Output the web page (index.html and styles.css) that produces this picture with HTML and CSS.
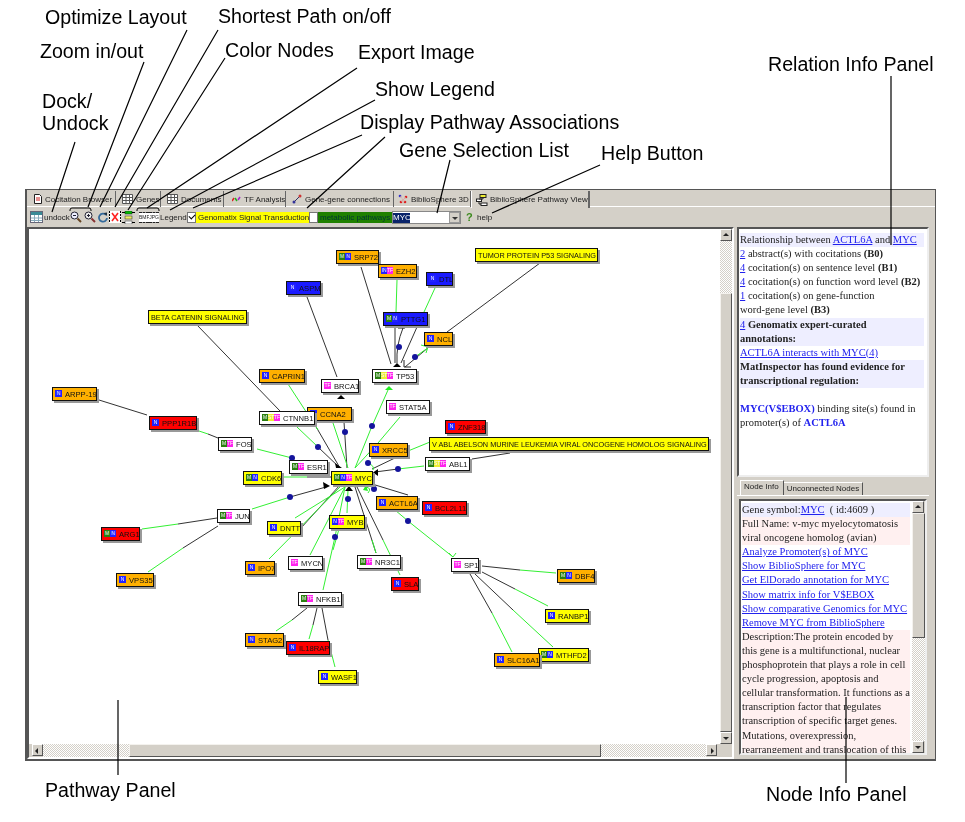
FILE: index.html
```html
<!DOCTYPE html>
<html lang="en">
<head>
    <meta charset="UTF-8">
    <title>BiblioSphere Pathway View</title>
    <link rel="stylesheet" href="styles.css">
</head>
<body>
<div class="page">

    <div class="app">
        <div class="tabs">
            <div class="tab t-88">
                <svg class="tab-icon" width="8" height="10" viewBox="0 0 8 10"><path d="M.5.5h5l2 2v7h-7z" fill="#fff" stroke="#222"/><path d="M2 4h4M2 6h4" stroke="#c22"/></svg>Cocitation Browser</div>
            <div class="tab t-45">
                <svg class="tab-icon" width="11" height="10" viewBox="0 0 11 10"><path d="M.5.5h10v9H.5zM.5 3.500h10M.5 6.500h10M4 .5v9M7.500.5v9" fill="#fff" stroke="#555"/></svg>Genes</div>
            <div class="tab t-63">
                <svg class="tab-icon" width="11" height="10" viewBox="0 0 11 10"><path d="M.5.5h10v9H.5zM.5 3.500h10M.5 6.500h10M4 .5v9M7.500.5v9" fill="#fff" stroke="#555"/></svg>Documents</div>
            <div class="tab t-62 t-wide">
                <svg class="tab-icon" width="9" height="6" viewBox="0 0 9 6"><path d="M0 5l2-3" stroke="#d22" stroke-width="1.500"/><path d="M3 2l2 3" stroke="#2a2" stroke-width="1.500"/><path d="M6 4l2-3" stroke="#a2c" stroke-width="1.500"/></svg>TF Analysis</div>
            <div class="tab t-108">
                <svg class="tab-icon" width="10" height="10" viewBox="0 0 10 10"><path d="M2 8L8 2" stroke="#336"/><circle cx="2" cy="8" r="1.500" fill="#339"/><circle cx="8" cy="2" r="1.500" fill="#c33"/></svg>Gene-gene connections</div>
            <div class="tab t-77 t-narrow">
                <svg class="tab-icon" width="10" height="10" viewBox="0 0 10 10"><circle cx="2" cy="2" r="1.300" fill="#33c"/><circle cx="8" cy="3" r="1.300" fill="#d22"/><circle cx="3" cy="8" r="1.300" fill="#d22"/><circle cx="7" cy="8" r="1.300" fill="#d22"/><path d="M2 2l5 6M8 3L3 8" stroke="#d88" stroke-dasharray="1 1"/></svg>BiblioSphere 3D</div>
            <div class="tab t-119 t-narrow active">
                <svg class="tab-icon" width="12" height="12" viewBox="0 0 12 12"><rect x="4" y=".5" width="6" height="3" fill="#ee3" stroke="#222"/><rect x=".5" y="5" width="5" height="2.500" fill="#fff" stroke="#222"/><rect x="5" y="9" width="6" height="2.500" fill="#fff" stroke="#222"/><path d="M7 4v1H3M3 8v2h2" fill="none" stroke="#222"/></svg>BiblioSphere Pathway View</div>
        </div>

        <div class="toolbar">
            <svg class="tool" width="13" height="12" viewBox="0 0 13 12"><rect x=".5" y=".5" width="12" height="11" fill="#fff" stroke="#667"/><rect x="1" y="1" width="11" height="3" fill="#3a8a96"/><path d="M1 7h11M1 9.500h11M4.500 4v7M8.500 4v7" stroke="#8ab"/></svg>
            <span class="tool-text undock">undock</span>
            <svg class="tool" width="12" height="12" viewBox="0 0 12 12"><circle cx="4.500" cy="4.500" r="3.500" fill="#eef" stroke="#223"/><path d="M3 4.500h3" stroke="#223"/><path d="M7.500 7.500l3.500 3.500" stroke="#642" stroke-width="2"/></svg>
            <svg class="tool zoom2" width="12" height="12" viewBox="0 0 12 12"><circle cx="4.500" cy="4.500" r="3.500" fill="#eee" stroke="#223"/><path d="M3 4.500h3M4.500 3v3" stroke="#223"/><path d="M7.500 7.500l3.500 3.500" stroke="#833" stroke-width="2"/></svg>
            <svg class="tool rotate" width="10" height="11" viewBox="0 0 10 11"><path d="M8 3a4 4 0 1 0 1 3" fill="none" stroke="#346a9c" stroke-width="1.800"/><path d="M5.500 1l3.500-.5v3.500z" fill="#234"/></svg>
            <svg class="tool cross" width="12" height="12" viewBox="0 0 12 12"><rect width="12" height="12" fill="#fff"/><path d="M.5 0v12M11.500 0v12" stroke="#000" stroke-dasharray="2 1"/><path d="M3 2l6 8M9 2l-6 8" stroke="#f22" stroke-width="1.600"/></svg>
            <svg class="tool colors" width="13" height="13" viewBox="0 0 13 13"><rect x="3" y="0" width="7" height="3" fill="#0b0" stroke="#222" stroke-width=".5"/><rect x="3" y="5" width="7" height="3" fill="#ee6" stroke="#222" stroke-width=".5"/><rect x="3" y="10" width="7" height="3" fill="#fff" stroke="#222" stroke-width=".5"/><path d="M0 1.500h3M10 1.500h3M0 11.500h3M10 11.500h3" stroke="#000"/></svg>
            <span class="export"><span class="exp">BMP</span><span class="exp">JPG</span></span>
            <span class="tool-text legend">Legend</span>
            <span class="check on"></span>
            <span class="swatch sw-yellow">Genomatix Signal Transduction</span>
            <span class="check"></span>
            <span class="swatch sw-green">metabolic pathways</span>
            <div class="combo"><span class="combo-val">MYC</span><span class="combo-btn"></span></div>
            <span class="help-mark">?</span>
            <span class="tool-text help">help</span>
        </div>

        <div class="main">
            <div class="pathway">
                <div class="canvas-row">
                    <div class="canvas"></div>
                    <div class="vbar">
                        <span class="sb-btn sb-up"></span>
                        <span class="sb-track sb-short"></span>
                        <span class="sb-thumb sb-grow"></span>
                        <span class="sb-btn sb-down"></span>
                    </div>
                </div>
                <div class="hbar">
                    <span class="sb-btn sb-left"></span>
                    <span class="sb-track hb-a"></span>
                    <span class="sb-thumb hb-t"></span>
                    <span class="sb-track hb-b"></span>
                    <span class="sb-btn sb-right"></span>
                </div>
            </div>

            <div class="side">
                <div class="relation">
                    <p class="hl"><span class="nb">Relationship between <a>ACTL6A</a> and <a>MYC</a></span></p>
                    <p><a>2</a> abstract(s) with cocitations <b>(B0)</b></p>
                    <p><a>4</a> cocitation(s) on sentence level <b>(B1)</b></p>
                    <p><a>4</a> cocitation(s) on function word level <b>(B2)</b></p>
                    <p><a>1</a> cocitation(s) on gene-function<br>word-gene level <b>(B3)</b></p>
                    <p class="hl"><a>4</a> <b>Genomatix expert-curated annotations:</b></p>
                    <p><a>ACTL6A interacts with MYC(4)</a></p>
                    <p class="hl"><b>MatInspector has found evidence for transcriptional regulation:</b></p>
                    <p>&nbsp;</p>
                    <p><a class="bl">MYC(V$EBOX)</a> binding site(s) found in promoter(s) of <a class="bl">ACTL6A</a></p>
                </div>

                <div class="subtabs">
                    <span class="subtab active">Node Info</span>
                    <span class="subtab">Unconnected Nodes</span>
                </div>
                <div class="nodeinfo-wrap">
                    <div class="nodeinfo">
                        <p class="hl">Gene symbol:<a>MYC</a> &nbsp;( id:4609 )</p>
                        <p class="pk">Full Name: v-myc myelocytomatosis viral oncogene homolog (avian)</p>
                        <p><a>Analyze Promoter(s) of MYC</a></p>
                        <p><a>Show BiblioSphere for MYC</a></p>
                        <p><a>Get ElDorado annotation for MYC</a></p>
                        <p><a>Show matrix info for V$EBOX</a></p>
                        <p><a>Show comparative Genomics for MYC</a></p>
                        <p><a>Remove MYC from BiblioSphere</a></p>
                        <p class="pk">Description:The protein encoded by this gene is a multifunctional, nuclear phosphoprotein that plays a role in cell cycle progression, apoptosis and cellular transformation. It functions as a transcription factor that regulates transcription of specific target genes. Mutations, overexpression, rearrangement and translocation of this</p>
                    </div>
                    <div class="vbar vbar-small">
                        <span class="sb-btn sb-up"></span>
                        <span class="sb-thumb info-thumb"></span>
                        <span class="sb-track sb-grow"></span>
                        <span class="sb-btn sb-down"></span>
                    </div>
                </div>
            </div>
        </div>
    </div>

    <!-- network drawing, page coordinates -->
    <svg class="graph" width="965" height="822" viewBox="0 0 965 822">
        <g class="edge-k">
            <path d="M99 400L147 415M208 434L218 438M217 518L178 524M218 526L183 548"/>
            <path d="M307 297L337 377M361 267L391 364M395 326V363M417 327L401 363M403 328Q396 345 397 363"/>
            <path d="M429 347L405 367M540 263L447 332M197 325L280 411M344 422L347 468M318 447L340 468M315 425L340 468"/>
            <path d="M397 457L372 469M510 453L472 459M398 469L375 472M307 477H331M290 497L326 487M301 528L340 485"/>
            <path d="M372 484L408 495M307 608L292 620M317 608L313 625M322 608L328 640M482 566L520 570M482 572L515 589"/>
            <path d="M475 574L513 610M470 574L492 613M355 487L376 553M357 487L383 540"/>
        </g>
        <g class="edge-g">
            <path d="M199 431L208 434M178 524L142 529M183 548L148 572M397 280L396 312M435 288L424 312"/>
            <path d="M429 347L415 357M288 384L318 430M333 423L348 468M297 427L318 447M400 417L378 443L355 468"/>
            <path d="M388 390L372 426L355 468M408 451L430 442M424 466L398 469M257 449L292 458M282 477H307"/>
            <path d="M252 509L290 497M295 518L345 487M347 513L348 490M333 550L339 529M269 559L340 487M310 555L345 487"/>
            <path d="M323 590L335 537L345 487M376 553L372 540M400 575L383 540M395 510L408 521L453 557"/>
            <path d="M292 620L276 631M313 625L309 639M328 640L335 667M520 570L556 573M515 589L548 606"/>
            <path d="M513 610L553 647M492 613L512 652M368 463Q375 466 373 470M368 493Q372 488 366 487"/>
            <path d="M449 553L453 557L456 553M421 345L428 347L426 353"/>
        </g>
        <g class="heads">
            <path d="M393 367h8l-4 -4z"/>
            <path d="M337 399h8l-4 -4z"/>
            <path d="M335 463l7 5h-6z"/>
            <path d="M323 482l7 4 -6 3z"/>
            <path d="M345 491h8l-4 -5z"/>
            <path d="M378 469v7l-5 -3.500z"/>
        </g>
        <path class="head-open" d="M404 360v7h7"/>
        <path class="head-t" d="M398 328h7"/>
        <path class="head-g" d="M385 390l4 -4 4 4zM363 490l3 -5 2 6z"/>
        <g class="dots">
            <circle cx="399" cy="347" r="3"/><circle cx="415" cy="357" r="3"/><circle cx="345" cy="432" r="3"/>
            <circle cx="318" cy="447" r="3"/><circle cx="372" cy="426" r="3"/><circle cx="292" cy="458" r="3"/>
            <circle cx="368" cy="463" r="3"/><circle cx="398" cy="469" r="3"/><circle cx="290" cy="497" r="3"/>
            <circle cx="374" cy="489" r="3"/><circle cx="348" cy="499" r="3"/><circle cx="335" cy="537" r="3"/>
            <circle cx="408" cy="521" r="3"/>
        </g>
    </svg>

    <div class="nodes">
        <div class="node c-o" style="left:336px;top:250px;width:43px"><i class="bd m">M</i><i class="bd n">N</i>SRP72</div>
        <div class="node c-o" style="left:378px;top:264px;width:39px"><i class="bd n">IN</i><i class="bd f">TF</i>EZH2</div>
        <div class="node c-b" style="left:426px;top:272px;width:27px"><i class="bd n">N</i>DTL</div>
        <div class="node c-b" style="left:286px;top:281px;width:35px"><i class="bd n">N</i>ASPM</div>
        <div class="node c-b" style="left:383px;top:312px;width:45px"><i class="bd m">M</i><i class="bd n">N</i>PTTG1</div>
        <div class="node c-o" style="left:424px;top:332px;width:29px"><i class="bd n">N</i>NCL</div>
        <div class="node c-w" style="left:372px;top:369px;width:45px"><i class="bd m">M</i><i class="bd s">ST</i><i class="bd f">TF</i>TP53</div>
        <div class="node c-o" style="left:259px;top:369px;width:46px"><i class="bd n">N</i>CAPRIN1</div>
        <div class="node c-w" style="left:321px;top:379px;width:38px"><i class="bd f">TF</i>BRCA1</div>
        <div class="node c-o" style="left:307px;top:407px;width:45px"><i class="bd n">N</i>CCNA2</div>
        <div class="node c-w" style="left:259px;top:411px;width:56px"><i class="bd m">M</i><i class="bd s">ST</i><i class="bd f">TF</i>CTNNB1</div>
        <div class="node c-w" style="left:386px;top:400px;width:44px"><i class="bd f">TF</i>STAT5A</div>
        <div class="node c-r" style="left:445px;top:420px;width:41px"><i class="bd n">N</i>ZNF318</div>
        <div class="node c-o" style="left:369px;top:443px;width:39px"><i class="bd n">N</i>XRCC5</div>
        <div class="node c-w" style="left:425px;top:457px;width:45px"><i class="bd m">M</i><i class="bd s">ST</i><i class="bd f">TF</i>ABL1</div>
        <div class="node c-w" style="left:218px;top:437px;width:34px"><i class="bd m">M</i><i class="bd f">TF</i>FOS</div>
        <div class="node c-w" style="left:289px;top:460px;width:39px"><i class="bd m">M</i><i class="bd f">TF</i>ESR1</div>
        <div class="node c-y" style="left:243px;top:471px;width:39px"><i class="bd m">M</i><i class="bd n">N</i>CDK6</div>
        <div class="node c-y" style="left:331px;top:471px;width:42px"><i class="bd m">M</i><i class="bd n">N</i><i class="bd f">TF</i>MYC</div>
        <div class="node c-o" style="left:376px;top:496px;width:42px"><i class="bd n">N</i>ACTL6A</div>
        <div class="node c-r" style="left:422px;top:501px;width:45px"><i class="bd n">N</i>BCL2L11</div>
        <div class="node c-w" style="left:217px;top:509px;width:33px"><i class="bd m">M</i><i class="bd f">TF</i>JUN</div>
        <div class="node c-y" style="left:267px;top:521px;width:34px"><i class="bd n">N</i>DNTT</div>
        <div class="node c-y" style="left:329px;top:515px;width:36px"><i class="bd n">N</i><i class="bd f">TF</i>MYB</div>
        <div class="node c-o" style="left:52px;top:387px;width:45px"><i class="bd n">N</i>ARPP-19</div>
        <div class="node c-r" style="left:149px;top:416px;width:48px"><i class="bd n">N</i>PPP1R1B</div>
        <div class="node c-r" style="left:101px;top:527px;width:39px"><i class="bd m">M</i><i class="bd n">N</i>ARG1</div>
        <div class="node c-o" style="left:116px;top:573px;width:38px"><i class="bd n">N</i>VPS35</div>
        <div class="node c-w" style="left:288px;top:556px;width:35px"><i class="bd f">TF</i>MYCN</div>
        <div class="node c-o" style="left:245px;top:561px;width:30px"><i class="bd n">N</i>IPO7</div>
        <div class="node c-w" style="left:357px;top:555px;width:44px"><i class="bd m">M</i><i class="bd f">TF</i>NR3C1</div>
        <div class="node c-r" style="left:391px;top:577px;width:28px"><i class="bd n">N</i>SLA</div>
        <div class="node c-w" style="left:298px;top:592px;width:44px"><i class="bd m">M</i><i class="bd f">TF</i>NFKB1</div>
        <div class="node c-o" style="left:245px;top:633px;width:39px"><i class="bd n">N</i>STAG2</div>
        <div class="node c-r" style="left:286px;top:641px;width:44px"><i class="bd n">N</i>IL18RAP</div>
        <div class="node c-y" style="left:318px;top:670px;width:39px"><i class="bd n">N</i>WASF1</div>
        <div class="node c-w" style="left:451px;top:558px;width:28px"><i class="bd f">TF</i>SP1</div>
        <div class="node c-o" style="left:557px;top:569px;width:38px"><i class="bd m">M</i><i class="bd n">N</i>DBF4</div>
        <div class="node c-y" style="left:545px;top:609px;width:44px"><i class="bd n">N</i>RANBP1</div>
        <div class="node c-y" style="left:538px;top:648px;width:51px"><i class="bd m">M</i><i class="bd n">N</i>MTHFD2</div>
        <div class="node c-o" style="left:494px;top:653px;width:46px"><i class="bd n">N</i>SLC16A1</div>
        <div class="node c-y pw" style="left:475px;top:248px;width:123px">TUMOR PROTEIN P53 SIGNALING</div>
        <div class="node c-y pw" style="left:148px;top:310px;width:99px">BETA CATENIN SIGNALING</div>
        <div class="node c-y pw" style="left:429px;top:437px;width:280px">V ABL ABELSON MURINE LEUKEMIA VIRAL ONCOGENE HOMOLOG SIGNALING</div>
    </div>

    <!-- callouts over the screenshot -->
    <svg class="callouts" width="965" height="822" viewBox="0 0 965 822">
        <path d="M75 142L52 212M144 62L88 207M187 30L100 207M218 30L115 207M225 58L128 210M357 68L147 208M375 100L170 210M362 135L193 208M385 137L307 208M450 160L437 213M600 165L492 213M891 76V245M846 697V783M118 700V775"/>
        <path class="bracket" d="M70 211v-1q0-2 2-2h17q2 0 2 2v1M137 211v-1q0-2 2-2h18q2 0 2 2v1"/>
    </svg>

    <span class="lbl" style="left:45px;top:6px">Optimize Layout</span>
    <span class="lbl" style="left:218px;top:5px">Shortest Path on/off</span>
    <span class="lbl" style="left:40px;top:40px">Zoom in/out</span>
    <span class="lbl" style="left:225px;top:39px">Color Nodes</span>
    <span class="lbl" style="left:358px;top:41px">Export Image</span>
    <span class="lbl" style="left:375px;top:78px">Show Legend</span>
    <span class="lbl" style="left:42px;top:90px">Dock/<br>Undock</span>
    <span class="lbl" style="left:360px;top:111px">Display Pathway Associations</span>
    <span class="lbl" style="left:399px;top:139px">Gene Selection List</span>
    <span class="lbl" style="left:601px;top:142px">Help Button</span>
    <span class="lbl" style="left:768px;top:53px">Relation Info Panel</span>
    <span class="lbl" style="left:45px;top:779px">Pathway Panel</span>
    <span class="lbl" style="left:766px;top:783px">Node Info Panel</span>
</div>
</body>
</html>
```

FILE: styles.css
```css
* {
    box-sizing: border-box;
}

body {
    margin: 0;
    background: #fff;
    font-family: "Liberation Sans", Arial, sans-serif;
    color: #000;
}

.page {
    position: relative;
    width: 965px;
    height: 822px;
    padding: 189px 0 0 25px;
    overflow: hidden;
}

/* application window */
.app {
    width: 911px;
    height: 572px;
    background: #d4d0c8;
    border: 1px solid #555;
    border-left-width: 2px;
    border-bottom-width: 2px;
    display: flex;
    flex-direction: column;
    filter: blur(.3px);
}

.tabs {
    height: 17px;
    flex: none;
    display: flex;
    padding-left: 1px;
    border-bottom: 1px solid #fff;
    font-size: 8px;
    color: #222;
}

.tab {
    display: flex;
    align-items: center;
    gap: 3px;
    padding-left: 6px;
    white-space: nowrap;
    border-right: 1px solid #666;
    height: 16px;
    margin-top: 1px;
}

.t-88 { width: 88px; }
.t-45 { width: 45px; }
.t-63 { width: 63px; }
.t-62 { width: 62px; }
.t-108 { width: 108px; }
.t-77 { width: 77px; }
.t-119 { width: 119px; }
.t-wide { padding-left: 8px; }
.t-narrow { padding-left: 4px; }

.tab.active {
    background: #d4d0c8;
    height: 17px;
    border-left: 1px solid #fff;
    border-right: 2px solid #666;
    gap: 2px;
}

.tab-icon {
    flex: none;
}

.toolbar {
    height: 20px;
    display: flex;
    align-items: center;
    padding-left: 3px;
    font-size: 8px;
    color: #222;
    flex: none;
}

.tool { flex: none; }
.tool-text { white-space: nowrap; }
.undock { margin-left: 1px; width: 26px; }
.zoom2 { margin-left: 2px; }
.rotate { margin-left: 2px; }
.cross { margin-left: 1px; }
.colors { margin-left: 1px; }

.export {
    display: flex;
    margin-left: 4px;
    width: 21px;
}

.exp {
    font-size: 5px;
    width: 10px;
    height: 11px;
    line-height: 9px;
    text-align: center;
    background: #fff;
    border-top: 1px dashed #222;
    border-bottom: 1px dashed #222;
}

.legend { width: 25px; margin-left: 0; }

.check {
    width: 9px;
    height: 11px;
    background: #fff;
    border: 1px solid #777;
    flex: none;
    position: relative;
}

.check.on { margin-left: 2px; }

.check.on::after {
    content: "";
    position: absolute;
    left: 1px;
    top: 1px;
    width: 5px;
    height: 3px;
    border-left: 1px solid #000;
    border-bottom: 1px solid #000;
    transform: rotate(-45deg);
}

.swatch {
    height: 11px;
    line-height: 11px;
    padding-left: 2px;
    white-space: nowrap;
    flex: none;
}

.sw-yellow { background: #ff0; width: 113px; }
.sw-green { background: #1f8000; width: 74px; color: #033; }

.combo {
    width: 69px;
    height: 13px;
    background: #fff;
    border: 1px solid #888;
    display: flex;
    justify-content: space-between;
    font-size: 8px;
    flex: none;
}

.combo-val {
    background: #0a246a;
    color: #fff;
    width: 17px;
    height: 10px;
    line-height: 10px;
    margin-top: 1px;
    text-align: center;
}

.combo-btn {
    width: 11px;
    background: #d4d0c8;
    border: 1px solid #999;
    position: relative;
}

.combo-btn::after {
    content: "";
    position: absolute;
    left: 2px;
    top: 4px;
    border: 3px solid transparent;
    border-top: 3px solid #333;
}

.help-mark {
    color: #3c8a1e;
    font-weight: bold;
    font-size: 11px;
    margin-left: 5px;
    width: 11px;
}

/* panels */
.main {
    flex: 1;
    display: flex;
    gap: 3px;
    min-height: 0;
}

.pathway {
    width: 707px;
    flex: none;
    border: 2px solid;
    border-color: #555 #fff #fff #555;
    display: flex;
    flex-direction: column;
}

.canvas-row {
    flex: 1;
    display: flex;
    min-height: 0;
}

.canvas {
    flex: 1;
    background: #fff;
}

.vbar {
    width: 12px;
    display: flex;
    flex-direction: column;
    background: #d4d0c8;
}

.hbar {
    height: 13px;
    flex: none;
    display: flex;
    padding: 0 15px 0 3px;
    background: #d4d0c8;
}

.sb-btn {
    width: 11px;
    height: 12px;
    flex: none;
    background: #d4d0c8;
    border: 1px solid;
    border-color: #fff #555 #555 #fff;
    position: relative;
}

.vbar .sb-btn { width: 12px; }

.sb-btn::after {
    content: "";
    position: absolute;
    left: 2px;
    top: 3px;
    border: 3px solid transparent;
}

.sb-up::after { border-bottom-color: #222; top: 0; }
.sb-down::after { border-top-color: #222; top: 4px; }
.sb-left::after { border-right-color: #222; left: -1px; }
.sb-right::after { border-left-color: #222; left: 4px; }

.sb-track {
    background: repeating-conic-gradient(#d4d0c8 0 25%, #fff 0 50%) 0 0 / 2px 2px;
}

.sb-thumb {
    background: #d4d0c8;
    border: 1px solid;
    border-color: #f4f2ee #555 #555 #f4f2ee;
}

.sb-short { height: 52px; flex: none; }
.sb-grow { flex: 1; }
.hb-a { width: 86px; }
.hb-t { width: 472px; }
.hb-b { flex: 1; }

.side {
    flex: 1;
    display: flex;
    flex-direction: column;
    padding-right: 6px;
    min-width: 0;
}

.relation {
    height: 250px;
    flex: none;
    border: 2px solid;
    border-color: #555 #eee #eee #555;
    background: #fff;
    padding: 4px 3px 0 1px;
    font-family: "Liberation Serif", "Times New Roman", serif;
    font-size: 10.5px;
    line-height: 14.1px;
    color: #222;
}

.relation p, .nodeinfo p {
    margin: 0;
}

.nb { white-space: nowrap; }

a {
    color: #22e;
    text-decoration: underline;
}

a.bl {
    font-weight: bold;
    text-decoration: none;
}

.hl { background: #eeeeff; }
.pk { background: #fff0f0; }

.subtabs {
    height: 19px;
    flex: none;
    display: flex;
    align-items: flex-end;
    padding-left: 3px;
    font-size: 8px;
    color: #222;
    border-bottom: 1px solid #fff;
}

.subtab {
    height: 13px;
    line-height: 12px;
    padding: 0 3px;
    white-space: nowrap;
    border-right: 1px solid #555;
    border-top: 1px solid #fff;
}

.subtab.active {
    height: 15px;
    border-left: 1px solid #fff;
    padding: 0 4px 0 3px;
}

.nodeinfo-wrap {
    margin: 3px 2px 4px 2px;
    flex: 1;
    display: flex;
    border: 2px solid;
    border-color: #555 #eee #eee #555;
    background: #fff;
    min-height: 0;
}

.nodeinfo {
    flex: 1;
    min-width: 0;
    padding: 2px 2px 0 1px;
    overflow: hidden;
    font-family: "Liberation Serif", "Times New Roman", serif;
    font-size: 10.5px;
    line-height: 14.1px;
    color: #222;
}

.vbar-small { width: 13px; }
.info-thumb { height: 125px; flex: none; }

/* network */
.graph, .callouts, .nodes {
    position: absolute;
    left: 0;
    top: 0;
}

.graph path, .callouts path {
    fill: none;
}

.edge-k path { stroke: #333; stroke-width: 1; }
.edge-g path { stroke: #33f033; stroke-width: 1; }
.graph .heads path { fill: #000; }
.head-open, .head-t { stroke: #222; }
.graph .head-g { fill: #2e2; }
.dots circle { fill: #14149c; }

.nodes {
    filter: blur(.3px);
}

.node {
    position: absolute;
    height: 14px;
    padding-left: 2px;
    white-space: nowrap;
    font-size: 7.6px;
    color: #111;
    border: 1px solid #111;
    box-shadow: 2px 2px 0 #999;
    display: flex;
    align-items: center;
}

.c-o { background: #ffb000; }
.c-r { background: #f00; }
.c-b { background: #1a1aff; }
.c-y { background: #ff0; }
.c-w { background: #fff; }

.pw {
    font-size: 7.3px;
}

.bd {
    width: 6px;
    height: 7px;
    line-height: 7px;
    font-style: normal;
    font-size: 5px;
    text-align: center;
    color: #fff;
    flex: none;
    margin-top: -2px;
    overflow: hidden;
}

.bd:only-of-type { width: 7px; }
.bd:last-of-type { margin-right: 3px; }

.n { background: #22f; }
.m { background: #2a7f10; }
.s { background: #ee3; }
.f { background: #f2e; }

/* annotation labels */
.callouts path {
    stroke: #000;
    stroke-width: 1.2;
}

.callouts .bracket { stroke-width: 1; }

.lbl {
    position: absolute;
    font-size: 19.6px;
    line-height: 22px;
    white-space: nowrap;
    color: #000;
}
```
